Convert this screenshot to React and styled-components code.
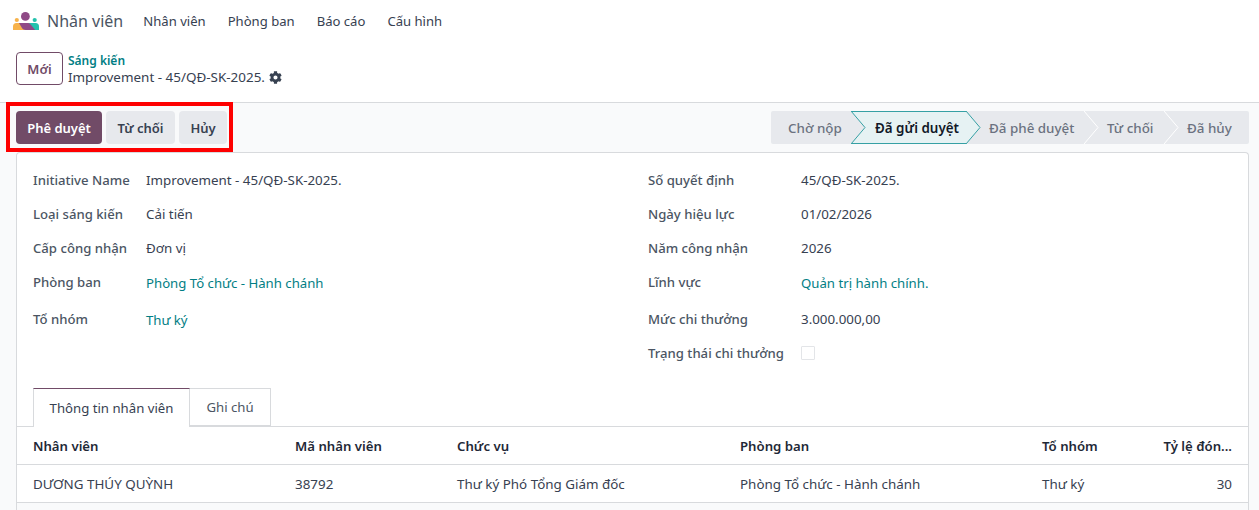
import React from "react";
import styled, { createGlobalStyle } from "styled-components";
import { FaCog } from "react-icons/fa";

const Global = createGlobalStyle`
  html, body { margin: 0; padding: 0; background: #f9fafb; }
  body { font-family: "Noto Sans", "Open Sans", sans-serif; font-size: 13px; color: #374151; overflow: hidden; }
  * { box-sizing: border-box; }
`;

const Page = styled.div`
  width: 1259px;
  height: 510px;
  overflow: hidden;
  display: flex;
  flex-direction: column;
`;

const NavBar = styled.header`
  height: 44px;
  background: #fff;
  display: flex;
  align-items: center;
  padding: 0 0 2px 13px;
`;
const AppBrand = styled.div`
  display: flex;
  align-items: center;
  gap: 8px;
  font-size: 16px;
  color: #4b5563;
  margin-right: 20px;
`;
const NavLink = styled.a`
  color: #374151;
  font-size: 13.1px;
  margin-right: 22px;
`;

const ControlPanel = styled.div`
  height: 59px;
  background: #fff;
  border-bottom: 1px solid #d8dadd;
  display: flex;
  align-items: flex-start;
  padding: 8px 0 0 16px;
  gap: 5px;
`;
const NewButton = styled.button`
  width: 47px;
  height: 33px;
  border: 1px solid #714b67;
  border-radius: 4px;
  background: #fff;
  color: #714b67;
  font: 600 13px "Noto Sans", sans-serif;
`;
const Breadcrumb = styled.div`
  display: flex;
  flex-direction: column;
  line-height: 17px;
`;
const CrumbLink = styled.a`
  color: #017e84;
  font-weight: 600;
  font-size: 12px;
`;
const CrumbCurrent = styled.div`
  display: flex;
  align-items: center;
  gap: 4px;
  font-size: 13.45px;
  color: #374151;
`;

const ActionBar = styled.div`
  height: 49px;
  display: flex;
  align-items: center;
  justify-content: space-between;
  padding: 0 10px 0 6px;
`;
const Highlight = styled.div`
  display: flex;
  gap: 4px;
  height: 50px;
  margin-top: -1px;
  align-self: flex-start;
  padding: 5px 2px 5px 6px;
  border: 4px solid #fe0000;
`;
const ActionButton = styled.button`
  width: ${p => p.$w}px;
  height: 33px;
  padding: 0;
  border: 0;
  border-radius: 4px;
  font: 600 13px "Noto Sans", sans-serif;
  background: ${p => (p.$primary ? "#714b67" : "#e7e9ed")};
  color: ${p => (p.$primary ? "#fff" : "#374151")};
`;
const StatusBar = styled.div`
  display: flex;
  height: 33px;
  background: #e7e9ed;
  border-radius: 2px;
`;
const Step = styled.div`
  position: relative;
  display: flex;
  align-items: center;
  padding: 0 ${p => (p.$last ? 18 : 9)}px 0 ${p => (p.$first ? 17 : p.$active ? 24 : 23)}px;
  width: ${p => p.$w}px;
  white-space: nowrap;
  font-size: 13.4px;
  font-weight: ${p => (p.$active ? 600 : 500)};
  color: ${p => (p.$active ? "#111827" : "#6b7280")};
  background: ${p => (p.$active ? "#e6f2f3" : "transparent")};
  box-shadow: ${p => (p.$active ? "inset 0 1px 0 #36a0a4, inset 0 -1px 0 #36a0a4" : "none")};
  z-index: ${p => p.$z};
`;
const StepText = styled.span`
  position: relative;
  z-index: 3;
`;
const Chevron = styled.svg`
  position: absolute;
  left: 100%;
  top: 0;
  width: 15px;
  height: 33px;
  margin-left: -0.5px;
`;

const Sheet = styled.main`
  flex: 1;
  margin: 0 10px 0 16px;
  background: #fff;
  border: 1px solid #d8dadd;
  border-bottom: 0;
  border-radius: 4px 4px 0 0;
  display: flex;
  flex-direction: column;
`;
const FormGrid = styled.div`
  display: grid;
  grid-template-columns: 615px 1fr;
  padding: 10px 16px 0;
  height: 235px;
`;
const FormColumn = styled.div`
  display: flex;
  flex-direction: column;
`;
const Row = styled.div`
  display: grid;
  grid-template-columns: ${p => (p.$wide ? "153px" : "113px")} 1fr;
  align-items: center;
  height: ${p => p.$h || 34}px;
`;
const Label = styled.div`
  font-weight: 500;
  font-size: 13.15px;
  color: #4b5563;
  margin-bottom: ${p => (p.$raised ? 2 : 0)}px;
`;
const Value = styled.div`
  font-size: 13.35px;
  color: #374151;
`;
const LinkValue = styled.a`
  font-size: 13.2px;
  color: #017e84;
`;
const Check = styled.span`
  display: block;
  width: 14px;
  height: 14px;
  border: 1px solid #e3e5e8;
  border-radius: 1px;
`;

const Tabs = styled.div`
  display: flex;
  height: 39px;
  padding-left: 16px;
  border-bottom: 1px solid #d8dadd;
`;
const Tab = styled.div`
  display: flex;
  align-items: center;
  justify-content: center;
  width: ${p => p.$w}px;
  font-size: 13.2px;
  background: #fff;
  color: ${p => (p.$active ? "#374151" : "#4b5563")};
  border: 1px solid #d8dadd;
  border-left-width: ${p => (p.$active ? 1 : 0)}px;
  border-top-color: ${p => (p.$active ? "#714b67" : "#d8dadd")};
  border-bottom: ${p => (p.$active ? "0" : "1px solid #d8dadd")};
  height: ${p => (p.$active ? 39 : 38)}px;
`;
const TableRow = styled.div`
  display: grid;
  grid-template-columns: 262px 162px 283px 302px 109px 113px;
  height: 38px;
  align-items: center;
  border-bottom: 1px solid #d8dadd;
  background: #fff;
`;
const Cell = styled.div`
  padding: 0 16px;
  white-space: nowrap;
  font-size: ${p => (p.$head ? 13.2 : 13.4)}px;
  font-weight: ${p => (p.$head ? 600 : 400)};
  color: ${p => (p.$head ? "#1f2937" : "#374151")};
  text-align: ${p => (p.$right ? "right" : "left")};
`;
const Footer = styled.div`
  flex: 1;
  background: #f9fafb;
`;

const Logo = () => (
  <svg width="26" height="18" viewBox="0 0 26 18">
    <circle cx="12.4" cy="4.400" r="4.400" fill="#8f4a86" />
    <circle cx="3.800" cy="8" r="2.100" fill="#f7b24a" />
    <circle cx="21.700" cy="8" r="2.100" fill="#23c2ad" />
    <path d="M0 18v-3.500A3.500 3.500 0 0 1 3.500 11H7l5.500 7z" fill="#f7b24a" />
    <path d="M26 18v-3.500a3.500 3.500 0 0 0-3.500-3.500H15l5.500 7z" fill="#23c2ad" />
    <path d="M6 11h8.500c1.500 0 2.500.6 3.400 1.700l4.300 5.300H12.500c-1.500 0-2.500-.6-3.400-1.700z" fill="#8f4a86" />
  </svg>
);

const steps = [
  { t: "Chờ nộp", w: 80, first: true, z: 3, stroke: "#36a0a4" },
  { t: "Đã gửi duyệt", w: 115, active: true, z: 2, stroke: "#36a0a4" },
  { t: "Đã phê duyệt", w: 118, z: 1, stroke: "#fff" },
  { t: "Từ chối", w: 80, z: 1, stroke: "#fff" },
  { t: "Đã hủy", w: 85, last: true, z: 1 },
];

const leftRows = [
  ["Initiative Name", "Improvement - 45/QĐ-SK-2025.", 34],
  ["Loại sáng kiến", "Cải tiến", 34],
  ["Cấp công nhận", "Đơn vị", 34],
  ["Phòng ban", "Phòng Tổ chức - Hành chánh", 35, true],
  ["Tổ nhóm", "Thư ký", 40, true],
];
const rightRows = [
  ["Số quyết định", "45/QĐ-SK-2025.", 34],
  ["Ngày hiệu lực", "01/02/2026", 34],
  ["Năm công nhận", "2026", 34],
  ["Lĩnh vực", "Quản trị hành chính.", 35, true],
  ["Mức chi thưởng", "3.000.000,00", 37],
];

const heads = ["Nhân viên", "Mã nhân viên", "Chức vụ", "Phòng ban", "Tổ nhóm", "Tỷ lệ đón..."];
const cells = ["DƯƠNG THÚY QUỲNH", "38792", "Thư ký Phó Tổng Giám đốc", "Phòng Tổ chức - Hành chánh", "Thư ký", "30"];

export default function App() {
  return (
    <Page>
      <Global />
      <NavBar>
        <AppBrand>
          <Logo />
          Nhân viên
        </AppBrand>
        {["Nhân viên", "Phòng ban", "Báo cáo", "Cấu hình"].map(n => (
          <NavLink key={n}>{n}</NavLink>
        ))}
      </NavBar>
      <ControlPanel>
        <NewButton>Mới</NewButton>
        <Breadcrumb>
          <CrumbLink>Sáng kiến</CrumbLink>
          <CrumbCurrent>
            Improvement - 45/QĐ-SK-2025.
            <FaCog size={13} color="#374151" />
          </CrumbCurrent>
        </Breadcrumb>
      </ControlPanel>
      <ActionBar>
        <Highlight>
          <ActionButton $primary $w={86}>Phê duyệt</ActionButton>
          <ActionButton $w={69}>Từ chối</ActionButton>
          <ActionButton $w={48}>Hủy</ActionButton>
        </Highlight>
        <StatusBar>
          {steps.map(s => (
            <Step key={s.t} $w={s.w} $first={s.first} $last={s.last} $active={s.active} $z={s.z}>
              <StepText>{s.t}</StepText>
              {!s.last && (
                <Chevron viewBox="0 0 15 33">
                  <path
                    d="M0 0L14 16.500L0 33"
                    fill={s.active ? "#e6f2f3" : "#e7e9ed"}
                    stroke={s.stroke}
                    strokeWidth="1"
                  />
                </Chevron>
              )}
            </Step>
          ))}
        </StatusBar>
      </ActionBar>
      <Sheet>
        <FormGrid>
          <FormColumn>
            {leftRows.map(([l, v, h, link]) => (
              <Row key={l} $h={h}>
                <Label $raised={link}>{l}</Label>
                {link ? <LinkValue>{v}</LinkValue> : <Value>{v}</Value>}
              </Row>
            ))}
          </FormColumn>
          <FormColumn>
            {rightRows.map(([l, v, h, link]) => (
              <Row key={l} $h={h} $wide>
                <Label $raised={link}>{l}</Label>
                {link ? <LinkValue>{v}</LinkValue> : <Value>{v}</Value>}
              </Row>
            ))}
            <Row $wide $h={32}>
              <Label>Trạng thái chi thưởng</Label>
              <Check />
            </Row>
          </FormColumn>
        </FormGrid>
        <Tabs>
          <Tab $active $w={157}>Thông tin nhân viên</Tab>
          <Tab $w={81}>Ghi chú</Tab>
        </Tabs>
        <TableRow>
          {heads.map((h, i) => (
            <Cell key={h} $head $right={i === 5}>{h}</Cell>
          ))}
        </TableRow>
        <TableRow>
          {cells.map((c, i) => (
            <Cell key={c} $right={i === 5}>{c}</Cell>
          ))}
        </TableRow>
        <Footer />
      </Sheet>
    </Page>
  );
}
